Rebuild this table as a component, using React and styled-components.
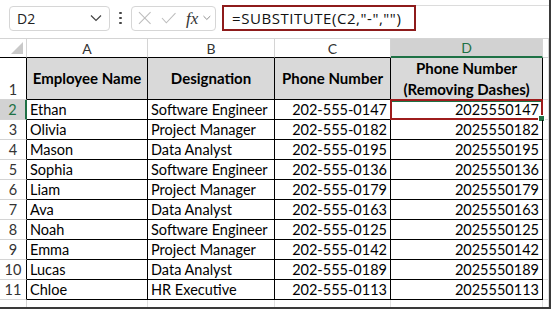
import React from 'react';
import styled, { createGlobalStyle, css } from 'styled-components';

const rows = [
  ['Ethan', 'Software Engineer', '202-555-0147'],
  ['Olivia', 'Project Manager', '202-555-0182'],
  ['Mason', 'Data Analyst', '202-555-0195'],
  ['Sophia', 'Software Engineer', '202-555-0136'],
  ['Liam', 'Project Manager', '202-555-0179'],
  ['Ava', 'Data Analyst', '202-555-0163'],
  ['Noah', 'Software Engineer', '202-555-0125'],
  ['Emma', 'Project Manager', '202-555-0142'],
  ['Lucas', 'Data Analyst', '202-555-0189'],
  ['Chloe', 'HR Executive', '202-555-0113'],
];

const GREEN = '#1e7145';

const App = () => {
  return (
    <>
      <GlobalStyle />
      <Frame>
        <Toolbar>
          <NameBox>
            <span>D2</span>
            <svg width="12" height="8" viewBox="0 0 12 8">
              <path d="M1 1.5 L6 6.5 L11 1.5" fill="none" stroke="#444" strokeWidth="1.2" />
            </svg>
          </NameBox>
          <Dots>
            <i />
            <i />
            <i />
          </Dots>
          <FxButtons>
            <svg width="14" height="14" viewBox="0 0 14 14">
              <path d="M1 1 L13 13 M13 1 L1 13" stroke="#bdbdbd" strokeWidth="1.1" />
            </svg>
            <svg width="16" height="12" viewBox="0 0 16 12">
              <path d="M1 6 L5.5 11 L15 1" fill="none" stroke="#bdbdbd" strokeWidth="1.1" />
            </svg>
            <Fx>fx</Fx>
            <svg width="8" height="6" viewBox="0 0 8 6">
              <path d="M0.5 1 L4 4.5 L7.5 1" fill="none" stroke="#888" strokeWidth="1" />
            </svg>
          </FxButtons>
          <FormulaBar>
            <Formula>=SUBSTITUTE(C2,"-","")</Formula>
          </FormulaBar>
        </Toolbar>

        <Grid>
          <Corner>
            <svg width="12" height="12" viewBox="0 0 12 12">
              <path d="M12 0 L12 12 L0 12 Z" fill="#c9c9c9" />
            </svg>
          </Corner>
          <ColHead>A</ColHead>
          <ColHead>B</ColHead>
          <ColHead>C</ColHead>
          <ColHead $active>D</ColHead>
          <ColHead $outside />

          <RowHead $bottom>1</RowHead>
          <HeadCell>Employee Name</HeadCell>
          <HeadCell>Designation</HeadCell>
          <HeadCell>Phone Number</HeadCell>
          <HeadCell>
            Phone Number
            <br />
            (Removing Dashes)
          </HeadCell>
          <Blank />

          {rows.map(([name, role, phone], i) => (
            <React.Fragment key={name}>
              <RowHead $active={i === 0}>{i + 2}</RowHead>
              <Cell>{name}</Cell>
              <Cell>{role}</Cell>
              <Cell $num>{phone}</Cell>
              <Cell $num $selected={i === 0}>
                {phone.replace(/-/g, '')}
                {i === 0 && <Handle />}
              </Cell>
              <Blank />
            </React.Fragment>
          ))}

          <RowHead $outside />
          <Blank />
          <Blank />
          <Blank />
          <Blank />
          <Blank />
        </Grid>
      </Frame>
    </>
  );
};

export default App;

const GlobalStyle = createGlobalStyle`
  body {
    margin: 0;
    background: #fff;
  }
`;

const Frame = styled.div`
  width: 551px;
  height: 309px;
  box-sizing: border-box;
  overflow: hidden;
  background: #fff;
  border-right: 2px solid #3a3a3a;
  border-bottom: 2px solid #3a3a3a;
  font-family: Lato, 'Liberation Sans', sans-serif;
`;

const Toolbar = styled.div`
  height: 39px;
  box-sizing: border-box;
  display: flex;
  align-items: center;
  padding: 0 0 2px 9px;
  border-bottom: 1px solid #d4d4d4;
`;

const NameBox = styled.div`
  width: 101px;
  height: 25px;
  box-sizing: border-box;
  border: 1px solid #d6d6d6;
  border-radius: 4px;
  display: flex;
  align-items: center;
  justify-content: space-between;
  padding: 0 7px 0 7px;
  font-family: 'Open Sans', sans-serif;
  font-size: 14px;
  color: #222;
`;

const Dots = styled.div`
  width: 21px;
  display: flex;
  flex-direction: column;
  align-items: center;
  gap: 2.5px;

  i {
    width: 2.5px;
    height: 2.5px;
    border-radius: 50%;
    background: #444;
  }
`;

const FxButtons = styled.div`
  width: 85px;
  height: 25px;
  box-sizing: border-box;
  border: 1px solid #d6d6d6;
  border-radius: 4px;
  display: flex;
  align-items: center;
  gap: 9px;
  padding: 0 4px 0 6px;
`;

const Fx = styled.span`
  font-family: 'Liberation Serif', serif;
  font-style: italic;
  font-size: 17px;
  color: #333;
  margin-left: 1px;
  margin-right: -4px;
  line-height: 1;
`;

const FormulaBar = styled.div`
  flex: 1;
  height: 25px;
  margin-left: 6px;
  display: flex;
  align-items: stretch;
  border-top: 1px solid #dcdcdc;
`;

const Formula = styled.div`
  width: 194px;
  box-sizing: border-box;
  margin-top: -1px;
  border: 2px solid #8e1b1b;
  padding: 0 0 0 8px;
  display: flex;
  align-items: center;
  font-family: 'Open Sans', sans-serif;
  font-size: 15px;
  letter-spacing: 0.55px;
  color: #111;
`;

const Grid = styled.div`
  display: grid;
  grid-template-columns: 27px 121px 127px 116px 152px 1fr;
  grid-template-rows: 19px 42px repeat(10, 20px) 1fr;
  height: 270px;
  font-size: 14.5px;
  color: #000;
`;

const Corner = styled.div`
  display: flex;
  align-items: flex-end;
  justify-content: flex-end;
  padding: 0 3px 3px 0;
  border-right: 1px solid #d4d4d4;
  border-bottom: 1px solid #000;
  box-sizing: border-box;
`;

const ColHead = styled.div`
  display: flex;
  align-items: center;
  justify-content: center;
  box-sizing: border-box;
  font-size: 14px;
  color: #333;
  border-right: 1px solid #d4d4d4;
  border-bottom: 1px solid #000;
  background: #fff;
  ${(p) =>
    p.$active &&
    css`
      background: #d2d2d2;
      color: ${GREEN};
      border-bottom: 2px solid ${GREEN};
    `}
  ${(p) =>
    p.$outside &&
    css`
      border-bottom-color: #d4d4d4;
    `}
`;

const RowHead = styled.div`
  display: flex;
  align-items: ${(p) => (p.$bottom ? 'flex-end' : 'center')};
  justify-content: center;
  box-sizing: border-box;
  padding-bottom: ${(p) => (p.$bottom ? '1px' : '0')};
  font-size: 14.5px;
  color: #333;
  border-right: 1px solid #000;
  border-bottom: 1px solid #d4d4d4;
  ${(p) =>
    p.$active &&
    css`
      background: #d2d2d2;
      color: ${GREEN};
      border-right: 2px solid ${GREEN};
    `}
  ${(p) =>
    p.$outside &&
    css`
      border-right-color: #d4d4d4;
    `}
`;

const HeadCell = styled.div`
  display: flex;
  align-items: center;
  justify-content: center;
  text-align: center;
  box-sizing: border-box;
  background: #d9d9d9;
  font-size: 15px;
  font-weight: 700;
  line-height: 21px;
  border-right: 1px solid #000;
  border-bottom: 1px solid #000;
`;

const Cell = styled.div`
  position: relative;
  display: flex;
  align-items: center;
  justify-content: ${(p) => (p.$num ? 'flex-end' : 'flex-start')};
  box-sizing: border-box;
  padding: 0 3px 0 3px;
  white-space: nowrap;
  border-right: 1px solid #000;
  border-bottom: 1px solid #000;
  ${(p) =>
    p.$selected &&
    css`
      border: 2px solid #9e1c1c;
      box-shadow: inset 0 1px 0 ${GREEN};
      margin: -1px 0 0 -1px;
      padding-right: 2px;
    `}
`;

const Handle = styled.span`
  position: absolute;
  right: -4px;
  bottom: -4px;
  width: 5px;
  height: 5px;
  background: ${GREEN};
  border: 1px solid #fff;
`;

const Blank = styled.div`
  border-right: 1px solid #e0e0e0;
  border-bottom: 1px solid #e0e0e0;
`;
